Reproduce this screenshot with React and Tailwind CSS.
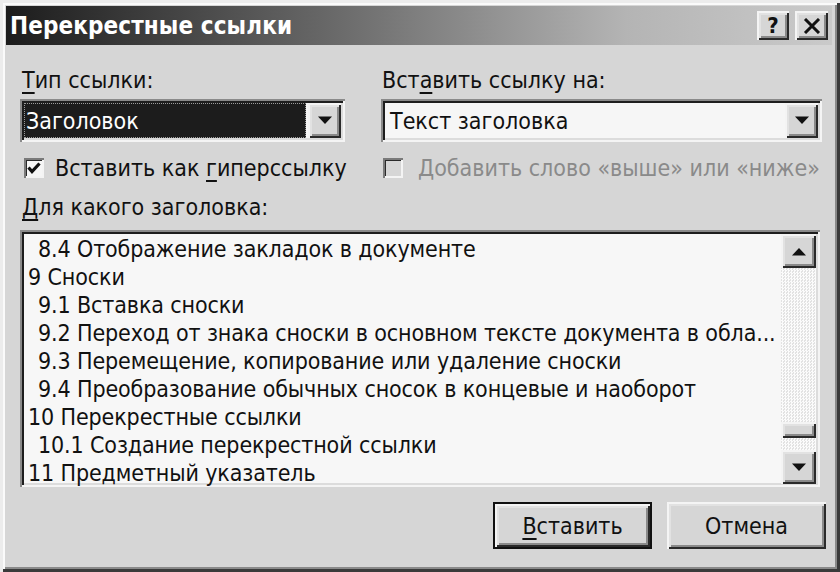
import React from 'react';

const raised =
    'bg-[#d6d6d6] shadow-[inset_2px_2px_#f4f4f4,inset_-2px_-2px_#2a2a2a,inset_4px_4px_#e2e2e2,inset_-4px_-4px_#8a8a8a]';
const sunken =
    'shadow-[inset_2px_2px_#8a8a8a,inset_-2px_-2px_#f4f4f4,inset_4px_4px_#1e1e1e,inset_-4px_-4px_#dcdcdc]';

function Arrow({ up }) {
    return (
        <svg width="16" height="9" viewBox="0 0 16 9">
            <path d={up ? 'M1 8.5 L8 1 L15 8.5 Z' : 'M1 0.5 L15 0.5 L8 8 Z'} fill="#111" />
        </svg>
    );
}

function Combo({ value, selected, width }) {
    return (
        <div className={`flex h-[43px] ${width} bg-[#f6f6f6] p-[4px] ${sunken}`}>
            <div className="flex-1 flex items-center pr-[2px]">
                {selected ? (
                    <div className="flex-1 h-full flex items-center bg-[#1c1c1c] text-white border border-dotted border-[#9a9a9a] pl-[1px]">
                        {value}
                    </div>
                ) : (
                    <span className="pl-[5px]">{value}</span>
                )}
            </div>
            <div className={`w-[33px] flex items-center justify-center ${raised}`}>
                <Arrow />
            </div>
        </div>
    );
}

function Check({ checked, disabled }) {
    return (
        <div className={`w-[20px] h-[20px] flex items-center justify-center ${disabled ? 'bg-[#d6d6d6]' : 'bg-[#f6f6f6]'} shadow-[inset_2px_2px_#7a7a7a,inset_-2px_-2px_#f4f4f4,inset_3px_3px_#2a2a2a]`}>
            {checked && (
                <svg width="14" height="12" viewBox="0 0 14 12">
                    <path d="M1.5 5.5 L5 9.5 L12.5 1.5" stroke="#111" strokeWidth="3.2" fill="none" />
                </svg>
            )}
        </div>
    );
}

const items = [
    { t: '8.4 Отображение закладок в документе', sub: true },
    { t: '9 Сноски' },
    { t: '9.1 Вставка сноски', sub: true },
    { t: '9.2 Переход от знака сноски в основном тексте документа в обла...', sub: true },
    { t: '9.3 Перемещение, копирование или удаление сноски', sub: true },
    { t: '9.4 Преобразование обычных сносок в концевые и наоборот', sub: true },
    { t: '10 Перекрестные ссылки' },
    { t: '10.1 Создание перекрестной ссылки', sub: true },
    { t: '11 Предметный указатель' },
];

export default function App() {
    return (
        <div className="w-[840px] h-[572px] bg-[#d6d6d6] text-[#111] text-[23px] leading-[28px] font-['DejaVu_Sans_Condensed','DejaVu_Sans',sans-serif] flex flex-col p-[6px] pr-[8px] pb-[4px] shadow-[inset_3px_3px_#ececec,inset_-3px_-3px_#3a3a3a,inset_5px_5px_#fafafa,inset_-5px_-5px_#8a8a8a]">
            {/* title bar */}
            <div className="h-[39px] flex items-center justify-between pl-[4px] pr-[4px] bg-[linear-gradient(90deg,#1c1c1c_0%,#6a6a6a_40%,#b4b4b4_75%,#cacaca_100%)]">
                <span className="text-white font-bold text-[24px] tracking-[0.1px]">Перекрестные ссылки</span>
                <div className="flex gap-[6px]">
                    <div className={`w-[32px] h-[29px] flex items-center justify-center font-bold text-[22px] ${raised}`}>?</div>
                    <div className={`w-[33px] h-[29px] flex items-center justify-center ${raised}`}>
                        <svg width="18" height="16" viewBox="0 0 18 16">
                            <path d="M2 1 L16 15 M16 1 L2 15" stroke="#111" strokeWidth="3" />
                        </svg>
                    </div>
                </div>
            </div>

            {/* body */}
            <div className="flex-1 flex flex-col pl-[14px] pr-[4px] pt-[21px]">
                <div className="flex gap-[36px]">
                    <div className="flex flex-col gap-[5px]">
                        <div className="pl-[2px]"><span className="underline underline-offset-4">Т</span>ип ссылки:</div>
                        <Combo value="Заголовок" selected width="w-[325px]" />
                    </div>
                    <div className="flex flex-col gap-[5px]">
                        <div className="pl-[1px]">Вст<span className="underline underline-offset-4">а</span>вить ссылку на:</div>
                        <Combo value="Текст заголовка" width="w-[441px]" />
                    </div>
                </div>

                <div className="flex mt-[12px] items-center">
                    <div className="w-[361px] flex items-center gap-[11px] pl-[4px]">
                        <Check checked />
                        <span>Вставить как <span className="underline underline-offset-4">г</span>иперссылку</span>
                    </div>
                    <div className="flex items-center gap-[15px] pl-[2px] text-[#8a8a8a]">
                        <Check disabled />
                        <span>Добавить слово «выше» или «ниже»</span>
                    </div>
                </div>

                <div className="mt-[11px] pl-[2px]"><span className="underline underline-offset-4">Д</span>ля какого заголовка:</div>

                <div className={`mt-[9px] w-[800px] h-[257px] bg-[#f7f7f7] px-[4px] pt-[5px] pb-0 flex ${sunken}`}>
                    <div className="flex-1 flex flex-col overflow-hidden tracking-[-0.12px]">
                        {items.map((it) => (
                            <div key={it.t} className={`h-[28px] leading-[28px] shrink-0 whitespace-nowrap ${it.sub ? 'pl-[14px]' : 'pl-[4px]'}`}>
                                {it.t}
                            </div>
                        ))}
                    </div>
                    <div className="w-[35px] -mt-[1px] mb-[3px] flex flex-col bg-[repeating-conic-gradient(#fbfbfb_0_25%,#e2e2e2_0_50%)] bg-[length:3px_3px]">
                        <div className={`h-[34px] flex items-center justify-center ${raised}`}><Arrow up /></div>
                        <div className="flex-1" />
                        <div className={`h-[16px] ${raised}`} />
                        <div className="h-[12px]" />
                        <div className={`h-[34px] flex items-center justify-center ${raised}`}><Arrow /></div>
                    </div>
                </div>

                <div className="flex justify-end gap-[15px] mt-[15px] pr-[2px]">
                    <div className="w-[159px] h-[47px] border-2 border-[#111]">
                        <div className={`w-full h-full flex items-center justify-center ${raised}`}>
                            <span><span className="underline underline-offset-4">В</span>ставить</span>
                        </div>
                    </div>
                    <div className={`w-[159px] h-[47px] flex items-center justify-center ${raised}`}>Отмена</div>
                </div>
            </div>
        </div>
    );
}
